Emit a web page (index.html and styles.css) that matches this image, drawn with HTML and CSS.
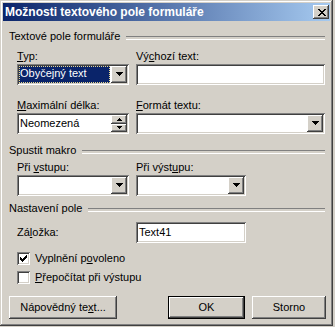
FILE: index.html
```html
<!DOCTYPE html>
<html lang="cs">
<head>
  <meta charset="UTF-8" />
  <title>Možnosti textového pole formuláře</title>
  <link rel="stylesheet" href="styles.css">
</head>
<body>
  <div class="window">
    <div class="titlebar">
      <span class="title">Možnosti textového pole formuláře</span>
      <div class="close">
        <svg width="8" height="7" viewBox="0 0 8 7">
          <rect x="0" y="0" width="2" height="1"/><rect x="6" y="0" width="2" height="1"/>
          <rect x="1" y="1" width="2" height="1"/><rect x="5" y="1" width="2" height="1"/>
          <rect x="2" y="2" width="4" height="1"/>
          <rect x="3" y="3" width="2" height="1"/>
          <rect x="2" y="4" width="4" height="1"/>
          <rect x="1" y="5" width="2" height="1"/><rect x="5" y="5" width="2" height="1"/>
          <rect x="0" y="6" width="2" height="1"/><rect x="6" y="6" width="2" height="1"/>
        </svg>
      </div>
    </div>

    <div class="content">
      <div class="group-title first"><span>Textové pole formuláře</span></div>
      <div class="row r1">
        <div class="col-left">
          <div class="label"><u>T</u>yp:</div>
          <div class="sunken combo w-left">
            <span class="value selected">Obyčejný text</span>
            <span class="arrow raised"><svg width="7" height="4"><rect x="0" y="0" width="7" height="1"/><rect x="1" y="1" width="5" height="1"/><rect x="2" y="2" width="3" height="1"/><rect x="3" y="3" width="1" height="1"/></svg></span>
          </div>
        </div>
        <div class="col-right">
          <div class="label">Vý<u>c</u>hozí text:</div>
          <div class="sunken edit w-wide"></div>
        </div>
      </div>
      <div class="row r2">
        <div class="col-left">
          <div class="label"><u>M</u>aximální délka:</div>
          <div class="sunken combo w-left">
            <span class="value">Neomezená</span>
            <span class="spin">
              <span class="spin-btn raised"><svg width="5" height="3"><rect x="2" y="0" width="1" height="1"/><rect x="1" y="1" width="3" height="1"/><rect x="0" y="2" width="5" height="1"/></svg></span>
              <span class="spin-btn raised"><svg width="5" height="3"><rect x="0" y="0" width="5" height="1"/><rect x="1" y="1" width="3" height="1"/><rect x="2" y="2" width="1" height="1"/></svg></span>
            </span>
          </div>
        </div>
        <div class="col-right">
          <div class="label"><u>F</u>ormát textu:</div>
          <div class="sunken combo w-wide">
            <span class="value"></span>
            <span class="arrow raised"><svg width="7" height="4"><rect x="0" y="0" width="7" height="1"/><rect x="1" y="1" width="5" height="1"/><rect x="2" y="2" width="3" height="1"/><rect x="3" y="3" width="1" height="1"/></svg></span>
          </div>
        </div>
      </div>

      <div class="group-title second"><span>Spustit makro</span></div>
      <div class="row r3">
        <div class="col-left">
          <div class="label">Při <u>v</u>stupu:</div>
          <div class="sunken combo w-left">
            <span class="value"></span>
            <span class="arrow raised"><svg width="7" height="4"><rect x="0" y="0" width="7" height="1"/><rect x="1" y="1" width="5" height="1"/><rect x="2" y="2" width="3" height="1"/><rect x="3" y="3" width="1" height="1"/></svg></span>
          </div>
        </div>
        <div class="col-right">
          <div class="label">Při výst<u>u</u>pu:</div>
          <div class="sunken combo w-short">
            <span class="value"></span>
            <span class="arrow raised"><svg width="7" height="4"><rect x="0" y="0" width="7" height="1"/><rect x="1" y="1" width="5" height="1"/><rect x="2" y="2" width="3" height="1"/><rect x="3" y="3" width="1" height="1"/></svg></span>
          </div>
        </div>
      </div>

      <div class="group-title third"><span>Nastavení pole</span></div>
      <div class="row bookmark">
        <div class="col-left"><span class="label">Zá<u>l</u>ožka:</span></div>
        <div class="col-right">
          <div class="sunken edit w-short"><span class="value">Text41</span></div>
        </div>
      </div>
      <div class="row check c1">
        <span class="checkbox sunken"><svg width="7" height="7"><rect x="6" y="0" width="1" height="1"/><rect x="5" y="1" width="2" height="1"/><rect x="0" y="2" width="1" height="1"/><rect x="4" y="2" width="3" height="1"/><rect x="0" y="3" width="2" height="1"/><rect x="3" y="3" width="3" height="1"/><rect x="0" y="4" width="5" height="1"/><rect x="1" y="5" width="3" height="1"/><rect x="2" y="6" width="1" height="1"/></svg></span>
        <span>Vyplnění p<u>o</u>voleno</span>
      </div>
      <div class="row check c2">
        <span class="checkbox sunken"></span>
        <span><u>P</u>řepočítat při výstupu</span>
      </div>

      <div class="buttons">
        <div class="button raised help">Nápovědný te<u>x</u>t...</div>
        <div class="button default ok"><div class="raised">OK</div></div>
        <div class="button raised cancel">Storno</div>
      </div>
    </div>
  </div>
</body>
</html>
```

FILE: styles.css
```css
* {
  box-sizing: border-box;
}
html, body {
  margin: 0;
  padding: 0;
}
body {
  width: 335px;
  height: 327px;
  background: #d4d0c8;
  font-family: "Liberation Sans", Arial, sans-serif;
  font-size: 11px;
  line-height: 13px;
  color: #000;
  overflow: hidden;
}
u {
  text-decoration: underline;
  text-underline-offset: 1px;
}

/* 3D borders, Windows classic */
.raised {
  background: #d4d0c8;
  box-shadow: inset -1px -1px #404040, inset 1px 1px #fff, inset -2px -2px #808080, inset 2px 2px #d4d0c8;
}
.sunken {
  background: #fff;
  box-shadow: inset 1px 1px #808080, inset -1px -1px #fff, inset 2px 2px #404040, inset -2px -2px #d4d0c8;
}

.window {
  width: 333px;
  height: 326px;
  padding: 3px;
  background: #d4d0c8;
  box-shadow: inset -1px -1px #404040, inset 1px 1px #d4d0c8, inset -2px -2px #808080, inset 2px 2px #fff;
}

.titlebar {
  height: 18px;
  display: flex;
  align-items: flex-start;
  justify-content: space-between;
  padding: 2px 1px 0 2px;
  background: linear-gradient(to right, #0a246a, #a6caf0);
}
.title {
  color: #fff;
  font-weight: bold;
  font-size: 12px;
  line-height: 15px;
}
.close {
  width: 16px;
  height: 14px;
  display: flex;
  align-items: center;
  justify-content: center;
  padding-left: 1px;
  background: #d4d0c8;
  box-shadow: inset -1px -1px #404040, inset 1px 1px #fff, inset -2px -2px #808080, inset 2px 2px #d4d0c8;
}

.content {
  padding: 0 5px 0 6px;
}

.group-title {
  display: flex;
  height: 13px;
}
.group-title::after {
  content: "";
  flex: 1;
  height: 2px;
  margin: 6px 0 0 6px;
  border-top: 1px solid #808080;
  border-bottom: 1px solid #fff;
}
.group-title.first { margin-top: 9px; }
.group-title.second { margin-top: 10px; }
.group-title.third { margin-top: 6px; }

.row {
  display: flex;
  margin-left: 8px;
}
.r1 { margin-top: 7px; }
.r2 { margin-top: 14px; }
.r3 { margin-top: 4px; }

.col-left {
  width: 119px;
  flex-shrink: 0;
}
.label {
  height: 13px;
  margin-bottom: 1px;
}

.combo, .edit {
  height: 21px;
  display: flex;
  padding: 2px;
}
.w-left { width: 112px; }
.w-wide { width: 189px; }
.w-short { width: 110px; }

.value {
  flex: 1;
  padding: 2px 0 0 1px;
  white-space: nowrap;
}
.value.selected {
  margin: 0 1px 0 0;
  padding: 1px 0 0 1px;
  background: #0a246a;
  color: #fff;
  outline: 1px dotted #e8d890;
  outline-offset: -1px;
}
.arrow {
  width: 16px;
  height: 17px;
  display: flex;
  align-items: center;
  justify-content: center;
  padding: 0 0 1px 1px;
}
.spin {
  width: 16px;
  display: flex;
  flex-direction: column;
}
.spin-btn {
  height: 8.5px;
  flex: 1;
  display: flex;
  align-items: center;
  justify-content: center;
  padding-left: 1px;
}

.bookmark {
  margin-top: 7px;
  align-items: center;
}
.bookmark .label {
  margin: 1px 0 0;
}

.check {
  align-items: center;
  height: 13px;
}
.c1 { margin-top: 9px; }
.c2 { margin-top: 6px; }
.checkbox {
  width: 13px;
  height: 13px;
  margin-right: 5px;
  display: flex;
  align-items: center;
  justify-content: center;
}

.buttons {
  display: flex;
  margin-top: 12px;
}
.button {
  height: 23px;
  line-height: 23px;
  text-align: center;
  flex-shrink: 0;
}
.help {
  width: 108px;
}
.ok {
  width: 77px;
  margin-left: 51px;
  border: 1px solid #000;
}
.ok .raised {
  height: 21px;
  line-height: 21px;
}
.cancel {
  width: 74px;
  margin-left: 7px;
}
```
